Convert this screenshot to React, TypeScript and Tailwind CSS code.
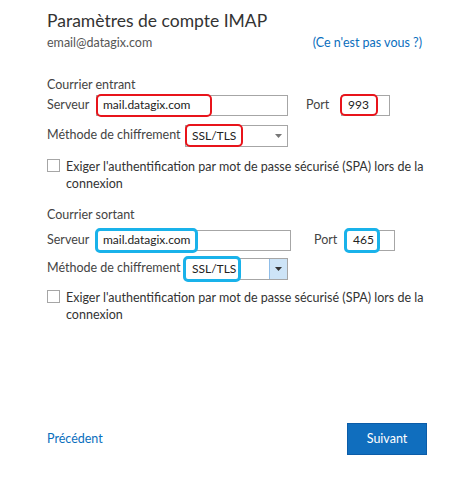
import { ReactNode } from "react";

const font = { fontFamily: 'Lato, "Noto Sans", sans-serif' };

function Mark({ color, className }: { color: "red" | "blue"; className: string }) {
  // annotation rectangles drawn over the fields
  return (
    <span
      className={`pointer-events-none absolute rounded-[5px] ${
        color === "red" ? "border-2 border-[#e8141b]" : "border-[3px] border-[#19b2ea]"
      } ${className}`}
    />
  );
}

function Field({ value, width, children }: { value: string; width: string; children?: ReactNode }) {
  return (
    <div className={`relative flex h-[21px] items-center border border-[#a6a6a6] bg-white pl-[6px] text-[12px] text-[#222] ${width}`}>
      {value}
      {children}
    </div>
  );
}

function Section({
  title,
  color,
  srvW,
  portGap,
  portW,
  blueBtn,
}: {
  title: string;
  color: "red" | "blue";
  srvW: string;
  portGap: string;
  portW: string;
  blueBtn?: boolean;
}) {
  const blue = color === "blue";
  return (
    <div className="flex flex-col">
      <div className="text-[12.5px] leading-[18px] text-[#444]">{title}</div>
      <div className={`flex items-center ${blue ? "mt-[6px]" : "mt-[1px]"}`}>
        <span className="w-[49px] whitespace-nowrap text-[12.5px] text-[#444]">Serveur</span>
        <Field value="mail.datagix.com" width={srvW}>
          <Mark color={color} className={blue ? "-left-[2px] -top-[3px] h-[25px] w-[103px]" : "-left-[1px] -top-[2px] h-[23px] w-[116px]"} />
        </Field>
        <span className={`whitespace-nowrap text-[12.5px] text-[#444] ${portGap}`}>Port</span>
        <Field value={blue ? "465" : "993"} width={portW}>
          <Mark color={color} className={blue ? "-left-[3px] -top-[3px] h-[25px] w-[36px]" : "-left-[2px] -top-[2px] h-[22px] w-[38px]"} />
        </Field>
      </div>
      <div className={`flex items-center ${blue ? "mt-[7px]" : "mt-[9px]"}`}>
        <span className="w-[138px] whitespace-nowrap text-[12.5px] text-[#444]">Méthode de chiffrement</span>
        <div className="relative flex h-[22px] w-[103px] items-center border border-[#a6a6a6] bg-white pl-[6px] text-[12px] text-[#222]">
          SSL/TLS
          <div
            className={`absolute right-0 top-0 flex h-full w-[18px] items-center justify-center ${
              blueBtn ? "border-l border-[#8fbde8] bg-[#cde4f7]" : ""
            }`}
          >
            <svg width="7" height="4" viewBox="0 0 7 4">
              <path d="M0 0h7L3.5 4z" fill={blueBtn ? "#333" : "#777"} />
            </svg>
          </div>
          <Mark color={color} className={blue ? "-left-[3px] -top-[3px] h-[26px] w-[58px]" : "-left-[1px] -top-[2px] h-[23px] w-[58px]"} />
        </div>
      </div>
      <div className={`${blue ? "mt-[9px]" : "mt-[11px]"} flex items-start gap-[6px]`}>
        <span className="mt-[1px] h-[13px] w-[13px] shrink-0 border border-[#a6a6a6] bg-white" />
        <span className="text-[12.5px] leading-[17px] text-[#333]">
          Exiger l'authentification par mot de passe sécurisé (SPA) lors de la connexion
        </span>
      </div>
    </div>
  );
}

export default function App() {
  return (
    <div style={font} className="flex h-[503px] w-[474px] flex-col bg-white pl-[47px] pr-[47px]">
      <h1 className="mt-[9px] text-[17.5px] leading-[24px] text-[#333]">Paramètres de compte IMAP</h1>
      <div className="mt-[1px] flex items-center justify-between pr-[5px] text-[12.5px]">
        <span className="text-[#555]">email@datagix.com</span>
        <a className="text-[#0a6ebd]">(Ce n'est pas vous ?)</a>
      </div>
      <div className="mt-[23px]">
        <Section title="Courrier entrant" color="red" srvW="w-[192px]" portGap="ml-[18px] w-[35px]" portW="w-[49px]" />
      </div>
      <div className="mt-[14px]">
        <Section title="Courrier sortant" color="blue" srvW="w-[195px]" portGap="ml-[23px] w-[32px]" portW="w-[49px]" blueBtn />
      </div>
      <div className="mt-auto mb-[48px] flex items-center justify-between">
        <a className="text-[12.5px] text-[#0a6ebd]">Précédent</a>
        <button className="h-[32px] w-[80px] border border-[#0b5ca8] bg-[#106ebe] text-[12.5px] text-white">Suivant</button>
      </div>
    </div>
  );
}
